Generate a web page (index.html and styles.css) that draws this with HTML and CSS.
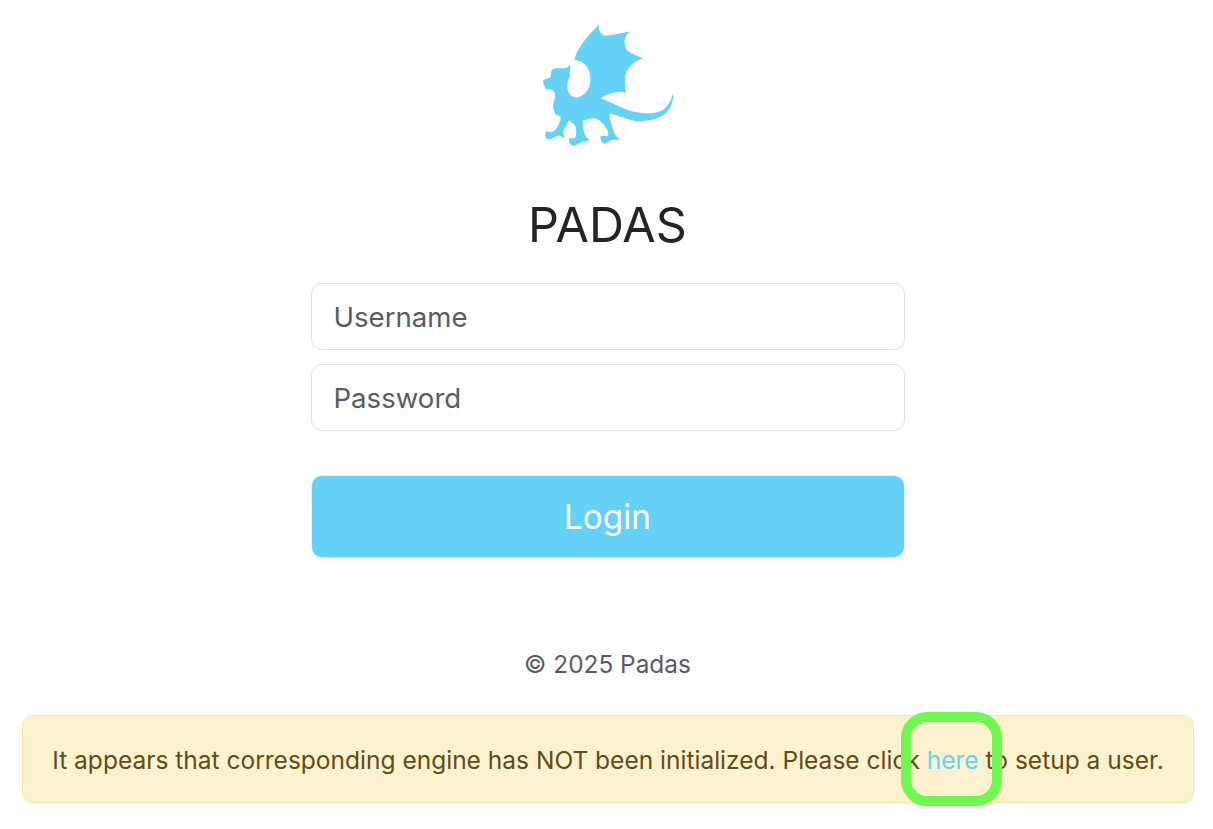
FILE: index.html
```html
<!DOCTYPE html>
<html lang="en">
<head>
    <meta charset="UTF-8">
    <title>Login</title>
    <link rel="stylesheet" href="styles.css">
</head>
<body>
    <main class="login">
        <svg class="logo" viewBox="0 0 465 420" width="155" height="140">
            <path fill="#64d1f6" d="M133 135C140 105 165 70 208 28C204 38 205 50 222 62C245 62 275 52 300 50C284 62 278 78 290 105C305 118 322 122 338 130C312 140 290 160 285 185C284 205 286 220 288 233C262 228 235 234 212 250C245 262 280 285 320 292C350 297 385 298 405 280C418 268 425 252 428 235C432 260 422 282 405 297C385 312 350 320 320 318C295 315 265 302 240 295C236 308 245 330 250 345C253 358 258 366 270 372C262 377 252 372 245 375C236 378 230 388 222 385C214 384 210 370 212 362L232 364C236 358 236 352 232 345C225 332 212 316 195 310C182 310 170 314 160 316C157 325 158 338 162 350C164 360 170 370 180 375C170 381 162 376 155 382C145 385 138 394 130 392C120 392 116 380 118 370L135 370C140 358 140 346 136 332C130 326 122 320 115 316C114 328 102 340 100 350C100 358 102 362 105 368C95 368 92 360 85 362C75 362 65 374 55 372C45 372 42 358 50 348C55 350 60 352 65 352C75 346 82 340 85 330C90 322 92 314 92 305C85 303 78 300 75 295C70 285 68 275 70 265C74 255 76 245 75 235C70 228 66 224 60 222C54 224 50 224 48 222C42 212 38 204 40 195C46 192 56 192 62 185C62 176 64 170 65 165C75 158 82 160 90 160C98 160 106 160 110 158C114 155 117 152 120 150C122 158 120 168 118 175L122 180C116 190 112 200 112 210C112 222 114 230 118 235C124 244 132 248 140 248C150 246 158 242 165 235C174 226 180 216 180 205C182 192 182 180 178 170C174 158 168 150 160 145C152 138 142 136 133 135Z"/>
        </svg>
        <h1 class="titulo">PADAS</h1>
        <form class="form-login" action="">
            <input class="campo" type="text" placeholder="Username">
            <input class="campo" type="password" placeholder="Password">
            <button class="entrar" type="button">Login</button>
        </form>
        <p class="copyright">© 2025 Padas</p>
    </main>
    <div class="aviso">
        <span class="aviso-texto">It appears that corresponding engine has NOT been initialized. Please click <a href="#">here</a> to setup a user.</span>
        <span class="marcador"></span>
    </div>
</body>
</html>
```

FILE: styles.css
```css
* {
    margin: 0;
    padding: 0;
    box-sizing: border-box;
}

body {
    font-family: Inter, "Liberation Sans", sans-serif;
    background-color: #fff;
    color: #212529;
    height: 829px;
    overflow: hidden;
}

.login {
    display: flex;
    flex-direction: column;
    align-items: center;
    padding: 15px 0 0 2px;
}

.logo {
    display: block;
}

.titulo {
    font-size: 48.5px;
    font-weight: 400;
    line-height: 56px;
    margin-top: 42px;
}

.form-login {
    width: 594px;
    margin-top: 30px;
    display: flex;
    flex-direction: column;
}

.campo {
    height: 67px;
    padding: 1px 22px 0;
    border: 1px solid #dee2e6;
    border-radius: 11px;
    font-family: inherit;
    font-size: 27.6px;
    margin-bottom: 14px;
}

.campo::placeholder {
    color: #595c5f;
    opacity: 1;
}

.entrar {
    height: 83px;
    margin-top: 30px;
    border: 1px solid #e6f4fa;
    border-radius: 11px;
    background-color: #64d1f6;
    color: #fff;
    font-family: inherit;
    font-size: 33.4px;
}

.copyright {
    margin-top: 92px;
    font-size: 24.4px;
    line-height: 29px;
    color: #595c5f;
}

.aviso {
    position: relative;
    margin: 36px 19px 0 22px;
    height: 88px;
    padding-top: 2px;
    display: flex;
    align-items: center;
    justify-content: center;
    background-color: #fdf2d0;
    border: 1px solid #fbe59f;
    border-radius: 11px;
    color: #614d14;
    font-size: 24.53px;
}

.aviso a {
    color: #64d1f6;
    text-decoration: none;
}

.marcador {
    position: absolute;
    left: 878px;
    top: -4px;
    width: 101px;
    height: 94px;
    border: 10px solid #70f94d;
    border-radius: 26px;
}
```
